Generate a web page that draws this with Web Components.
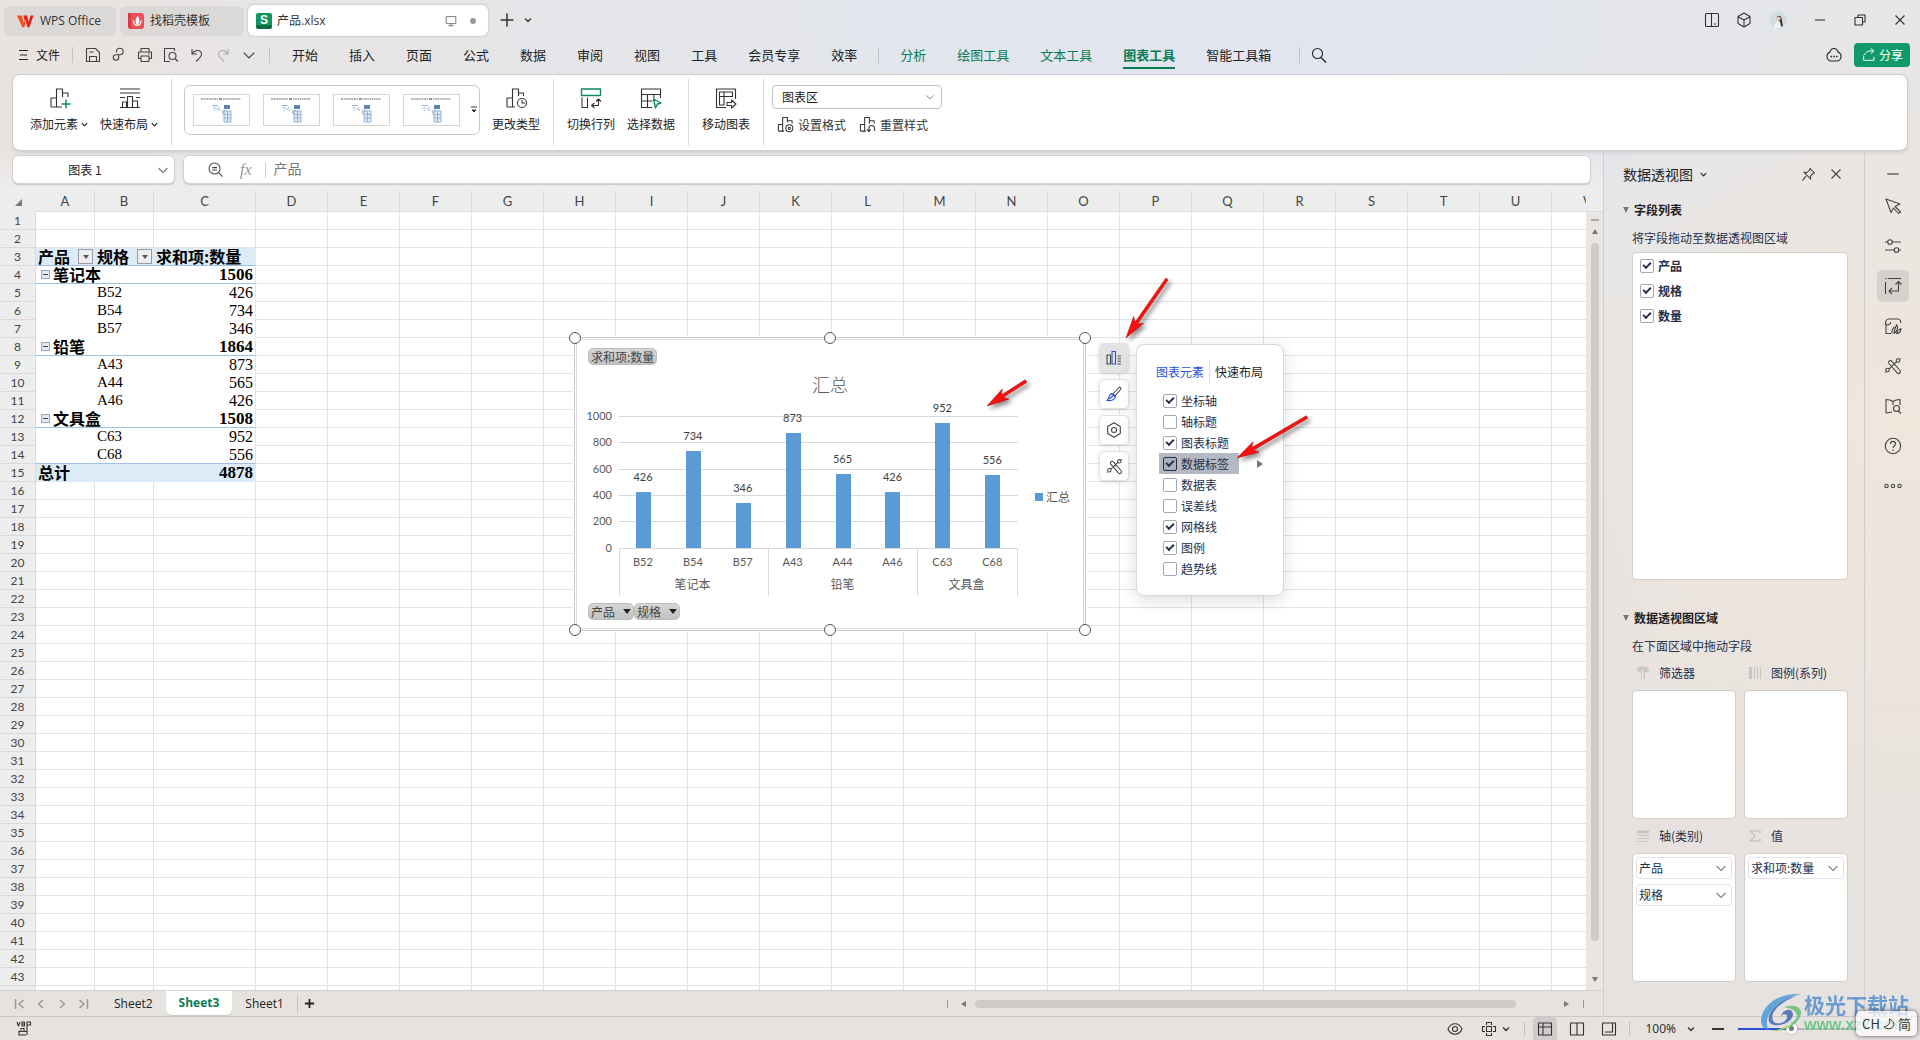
<!DOCTYPE html>
<html lang="zh-CN">
<head>
<meta charset="utf-8">
<title>产品.xlsx - WPS Office</title>
<style>
html,body{margin:0;height:100%}
body{overflow:hidden;color:#222;font:12px/16px "Noto Sans CJK SC",sans-serif;
background:
 radial-gradient(ellipse 800px 260px at 1180px 20px,#e1e5f0,rgba(225,229,240,0)),
 radial-gradient(ellipse 400px 500px at 1900px 420px,#efe6dc,rgba(239,230,220,0)),
 linear-gradient(90deg,#e9e3df,#e7e5e6 300px,#e5e6e9 1920px) 0 0/100% 300px no-repeat,
 linear-gradient(180deg,#e7e7e9,#e8e2df 60%,#e6e2df)}
</style>
</head>
<body>
<wps-app></wps-app>
<script>
const BASE=`*{box-sizing:border-box}
button{font:inherit;color:inherit;background:none;border:0;padding:0;margin:0;display:inline-flex;align-items:center;justify-content:center}
a{color:inherit;text-decoration:none}
input,select{font:inherit;color:inherit;margin:0}
input[type=checkbox]{appearance:none;flex:none;width:14px;height:14px;border:1px solid #a3a7b4;border-radius:2px;background:#fff;display:block;position:relative}
input[type=checkbox]:checked::after{content:"";position:absolute;left:2px;top:2px;width:6px;height:3px;border:solid #26304a;border-width:0 0 2px 2px;transform:rotate(-45deg)}`;
function define(tag,css,html){
  customElements.define(tag,class extends HTMLElement{
    constructor(){
      super();
      this.attachShadow({mode:'open'}).innerHTML='<style>'+BASE+css+'</style>'+(typeof html==='function'?html(this):html);
    }
  });
}

const G='stroke="#0f8a5f"';
const ICONS={
 w:[20,'<path d="M1 4h5.500l2 8 1.500-5h3l-4 10H7z" fill="#fa4b1e" stroke="none"/><path d="M8 4h4.500l1.500 7 2-7h3.500l-4.500 13h-3z" fill="#e3241b" stroke="none"/><path d="M10 9l2 8" stroke="#ffd9cc"/>'],
 daoke:[16,'<rect width="16" height="16" rx="3" fill="#ef4f56" stroke="none"/><path d="M0 0h3v16H3a3 3 0 0 1-3-3z" fill="#d93a44" stroke="none"/><path d="M9.500 3c2.500 2 2.500 6 0 9-2.500-2-2.500-6 0-9z" fill="#fff" stroke="none"/><path d="M5.500 7.500c0 2.500 1.500 4.500 3.500 5M13 7.500c0 2.500-1.500 4.500-3.500 5" stroke="#fff" stroke-width="1.300"/>'],
 monitor:[16,'<path d="M2.500 3h11v8h-11zM8 11v2.500M5 13.500h6"/>'],
 plus:[16,'<path d="M8 1.500v13M1.500 8h13" stroke-width="1.500"/>'],
 chev:[10,'<path d="M2 3.500l3 3 3-3" stroke-width="1.300"/>'],
 chevw:[12,'<path d="M1.500 4l4.500 4.500L10.500 4"/>'],
 phone:[18,'<rect x="2.500" y="2.500" width="13" height="13" rx="1"/><path d="M8.500 2.500v13M11 13h2"/>'],
 cube:[18,'<path d="M9 2l6 3.500v7L9 16l-6-3.500v-7zM3.500 6L9 9l5.500-3M9 9v7"/>'],
 min:[14,'<path d="M2 7h10"/>'],
 restore:[14,'<path d="M2 4.500h7.500V12H2zM5 4.500V2h7v7H9.500"/>'],
 close:[14,'<path d="M2.500 2.500l9 9M11.500 2.500l-9 9"/>'],
 menu:[12,'<path d="M1 1.500h9M2 6h7M1 10.500h9"/>'],
 save:[18,'<path d="M2.500 2.500h9l4 4v9h-13zM5.500 15.500v-5h7v5M5.500 6h4"/>'],
 export:[18,'<path d="M6.500 6.500V5.500a3.300 3.300 0 1 1 3.300 3.300H6a2.700 2.700 0 1 0 2.700 2.700V8"/>'],
 print:[18,'<path d="M5 6V2.500h8V6M5 12.500H2.500V6h13v6.500H13M5 10h8v5.500H5zM12 8h1.500"/>'],
 preview:[18,'<path d="M8 15.500H2.500v-13h10V5"/><circle cx="10.500" cy="10" r="3.500"/><path d="M13 12.500l3 3"/>'],
 undo:[18,'<path d="M4 3v5h5M4.500 7.500C7 3.500 13 3.500 13.500 8c0 3-3 5-5.500 7.500"/>'],
 redo:[18,'<path d="M14 3v5H9M13.500 7.500C11 3.500 5 3.500 4.500 8c0 3 3 5 5.500 7.500"/>'],
 search:[18,'<circle cx="7.500" cy="7.500" r="5"/><path d="M11 11.500l5 5" stroke-width="1.300"/>'],
 cloud:[18,'<path d="M9 2.500c2 0 3.500 1.500 4 3.500 2 1 3.500 2.500 3 5-.5 2.500-2 4-4 4H6c-2 0-3.500-1.500-4-4-.5-2.500 1-4 3-5 .5-2 2-3.500 4-3.500z"/><path d="M5.500 10.500h1.500M8.300 10.500h1.500M11 10.500h1.500" stroke-width="1.600"/>'],
 share:[18,'<path d="M3 9.500v5.500h11.500V11M4 9c1-3.500 4-5 10-4.500M11 1.500l3.500 3-3.500 3"/>'],
 addel:[22,`<path d="M2 20v-9h5.500M7.500 20V2h6v8M2 20h11M13.500 6h5.500v4"/><path ${G} stroke-width="1.400" d="M17 12.500v9M12.500 17h9"/>`],
 layout:[22,'<path d="M1 2h20M1 6h20M1 10.500h5M17 10.500h4M1 20.500h20M3.500 20.500v-5.500h4v5.500M8.500 20.500V9.500h5v11M13.500 14h5v6.500"/>'],
 type:[22,'<path d="M2 20v-9h5.500M7.500 20V2h6v7M2 20h8M13.500 6h5v3"/><circle cx="17" cy="16" r="4.500"/><path d="M17 13v3h3"/>'],
 swap:[22,`<path ${G} stroke-width="1.400" d="M1.500 2h19v6.500h-19z"/><path d="M2 10.500V20.500h5.500v-10M12 18.500h6.500v-6M14.500 16l-3 2.500 3 2.500M16 14.500l2.500-2.500 2.500 2.500"/>`],
 pick:[22,`<path d="M12 20.500H1.500V2h19v9M1.500 7.500h19M7.500 7.500v13M1.500 14h11M14 7.500v4"/><path ${G} stroke-width="1.400" d="M13.500 12l7.500 4-3.500 1-2 4z"/>`],
 move:[22,'<path d="M11 20.500H1.500V2h19v10M4.500 5h13v4.500H9V18H4.500zM9 5v4.500M4.500 9.500H9M12 15.500h4.500V13l4.500 4-4.500 4v-2.500H12z"/>'],
 setfmt:[18,'<path d="M1.500 16V9H6M6 16V1.500h5V7M1.500 16h6M11 5h5v3"/><circle cx="13" cy="13" r="3.700"/><circle cx="13" cy="13" r="1.200"/>'],
 reset:[18,'<path d="M1.500 16V9H6M6 16V1.500h5V8M1.500 16h6M11 5h5v3M10.500 16v-3a3 3 0 0 1 6 0v3M8.500 14l2 2.500 2-2.500"/>'],
 zoomout:[18,'<circle cx="8" cy="8" r="5.800"/><path d="M5.500 7h5M5.500 9.500h5M12.300 12.300l4.200 4.200"/>'],
 pin:[16,'<path d="M9.500 1.500l5 5-2 .5-2.500 3 .5 3L3 5.500l3 .5 3-2.500zM5.500 9.500l-4 5"/>'],
 cursor:[18,'<path d="M2 2l14 5-5 2.500 5.500 5.500-2 1.500-5-5.500L7 15.500z"/>'],
 sliders:[18,'<path d="M1 5h3M8 5h9M1 13h9.500M15 13h2"/><circle cx="6" cy="5" r="2.300"/><circle cx="12.500" cy="13" r="2.300"/>'],
 pivot:[18,'<path d="M4 1.500h13M1.500 5v12M1 1.500h1.500M5 14h9.500V5M8 11l-3 3 3 3M11.500 7.500l3-3 3 3"/>'],
 style:[18,'<path d="M7 16.500H2V6.500M2 8C.5 4 3 2 5 2h9c2 0 3 2 2.500 4M2 8c3 0 5-1 4.500-3M8 16.500c-1-3 1-5 2.500-6.500M10 16.500c0-4 2-6 2.500-9 2 3 1 6-2.500 9zM12.500 16.500c1-3 2-4 4.500-5 0 3-1.500 5-4.500 5z"/>'],
 tools:[18,'<path d="M5 6.500a1.800 1.800 0 0 1 2.800-2.300l8.200 9.300a1.800 1.800 0 0 1-2.800 2.300zM8 9l2.500-2.300"/><circle cx="14" cy="3.500" r="1.800"/><circle cx="3.500" cy="13" r="1.800"/><path d="M10.500 6.500l2.300-1.800M5 12l2-2M1.500 15l-.5.500M16 2l.7-.7"/>'],
 book:[18,'<path d="M8 15l-6 1V2.500c3 0 5 .5 7 2 2-1.500 4-2 7-2V8M9 4.500V8"/><circle cx="12.500" cy="11.500" r="3"/><path d="M14.500 14l2.500 2.500"/>'],
 help:[18,'<circle cx="9" cy="9" r="7.700"/><path d="M6.500 7c0-3.500 5-3.500 5 0 0 2-2.500 2-2.500 4M9 12.500v1.500"/>'],
 dots:[18,'<circle cx="2.500" cy="9" r="1.700"/><circle cx="9" cy="9" r="1.700"/><circle cx="15.500" cy="9" r="1.700"/>'],
 bars:[16,'<path d="M1 5h3.500v9H1z"/><path stroke="#2a50d8" d="M6 1.500h3.500V14H6z"/><path d="M11.500 6H15M11.500 8.700H15M11.500 11.300H15M11.500 14H15"/>'],
 brush:[16,'<path d="M7 8l6-6.500c1-.5 2.500.5 1.500 2L9 10z"/><path stroke="#2a50d8" d="M5.500 7.500L9.500 11c0 2-4 4-8.500 3.500 2.500-2 1-5 4.500-7zM3 13l4-3"/>'],
 hex:[16,'<path d="M8 .8l6.300 3.600v7.200L8 15.200l-6.300-3.600V4.400z"/><circle cx="8" cy="8" r="2.500"/>'],
 filter:[14,'<path d="M1 2c2-2 10-2 12 0v3L9 7v6H5V7L1 5z" fill="#cbc8c6" stroke="none"/><path d="M6.500 4v9" stroke="#eee"/>'],
 cols:[14,'<path d="M2.500 1v12" stroke="#c8c5c3" stroke-width="3"/><path d="M6.500 1v12M9.500 1v12M12.500 1v12" stroke="#c8c5c3"/>'],
 rows:[14,'<path d="M1 3h12" stroke="#c8c5c3" stroke-width="3"/><path d="M1 6.500h12M1 9.500h12M1 12.500h12" stroke="#c8c5c3"/>'],
 sigma:[14,'<path d="M12 4V2H2l5 5-5 5h10v-2" stroke="#c8c5c3" stroke-width="1.600"/>'],
 first:[12,'<path d="M1.500 1v10M9.500 2L5 6l4.500 4" stroke-width="1.600"/>'],
 prev:[12,'<path d="M8 2L3.500 6 8 10" stroke-width="1.600"/>'],
 next:[12,'<path d="M4 2l4.500 4L4 10" stroke-width="1.600"/>'],
 last:[12,'<path d="M10.500 1v10M2.500 2L7 6l-4.500 4" stroke-width="1.600"/>'],
 add:[12,'<path d="M6 1v10M1 6h10" stroke-width="2"/>'],
 vb:[16,'<path d="M1 1l1.500 4L4 1M6 1v4h2.500V1zM6 3h2.500M11 14V1h3.500v3H11M3 9.500v4.500h7M5 9.500V7.500h3v3h2.500M3 10.500h5"/>'],
 eye:[16,'<path d="M1 8c3-7 11-7 14 0-3 7-11 7-14 0z"/><circle cx="8" cy="8" r="2.500"/>'],
 cross:[16,'<path d="M5.500 5.500h5v5h-5zM5.500 4V1.500h5V4M5.500 12v2.500h5V12M4 5.500H1.500v5H4M12 5.500h2.500v5H12"/>'],
 grid:[16,'<path d="M1.500 2h13v12h-13zM1.500 6h13M6 2v12"/>'],
 split:[16,'<path d="M1.500 2h13v12h-13zM8 2v12"/>'],
 page:[16,'<path d="M1.500 2h13v12h-13zM4 11h7.500V2"/>']
};
customElements.define('wps-icon',class extends HTMLElement{
  constructor(){
    super();
    const [v,p]=ICONS[this.getAttribute('name')], s=this.getAttribute('size')||v;
    this.attachShadow({mode:'open'}).innerHTML=`<style>:host{display:inline-flex;flex:none}svg{display:block}</style><svg width="${s}" height="${s}" viewBox="0 0 ${v} ${v}" fill="none" stroke="currentColor" stroke-width="1.1" stroke-linejoin="round" aria-hidden="true">${p}</svg>`;
  }
});
const I=(n,s)=>`<wps-icon name="${n}"${s?` size="${s}"`:''}></wps-icon>`;
const B=(n,label,s,cls='')=>`<button class="${cls}" aria-label="${label}">${I(n,s)}</button>`;

define('title-bar',`:host{display:flex;height:38px;padding:0 13px 2px 4px;align-items:flex-end;color:#333;font-family:"Open Sans","Noto Sans CJK SC",sans-serif}
.tab{height:30px;border-radius:6px;background:#dbd9d8;display:flex;align-items:center;gap:6px;padding:0 12px;margin-right:4px}
.t1{width:112px}.t2{width:124px;padding:0 8px;gap:6px}
.on{width:240px;height:31px;background:#fff;box-shadow:0 0 2px rgba(0,0,0,.3);padding:0 11px 0 8px;gap:5px}
.s{width:16px;height:16px;background:linear-gradient(#12955f 12px,#0a6b45 12px);border-radius:2px;color:#fff;font:bold 12px/15px "Liberation Sans",sans-serif;text-align:center}
.on wps-icon{color:#777}
.g{flex:1}.dot{width:6px;height:6px;border-radius:50%;background:#999;margin:0 1px 0 7px}
.new{margin:0 0 8px 7px;gap:8px;display:flex;align-items:center}
.r{display:flex;align-items:center;height:32px;gap:26px}
.r>.n{margin-right:-12px}.r>.k{margin-right:-10px}
.av{width:18px;height:18px;border-radius:50%}`,
`<a class="tab t1" href="#">${I('w',18)}WPS Office</a><a class="tab t2" href="#">${I('daoke')}找稻壳模板</a>
<a class="tab on" href="#"><span class="s">S</span>产品.xlsx<span class="g"></span>${I('monitor',14)}<span class="dot"></span></a>
<div class="new">${B('plus','新建')}${B('chev','更多')}</div><div class="g"></div>
<div class="r">${B('phone','侧栏',0,'n')}${B('cube','应用',0,'k')}
<svg class="av" viewBox="0 0 18 18" aria-hidden="true"><circle cx="9" cy="9" r="9" fill="#cfdfe0"/><path d="M7.500 7c.5-3 4.500-3 5 0l1.500 8-2 .5-1-5z" fill="#4a3238"/><circle cx="9.500" cy="7.500" r="2" fill="#e8c4b4"/><path d="M5 17c0-4 3-7 5-6l2 6z" fill="#eef6f8"/></svg>
${B('min','最小化')}${B('restore','还原')}${B('close','关闭')}</div>`);

define('menu-bar',`:host{display:flex;height:36px;align-items:center;padding:0 10px 2px 18px;font-size:13px;color:#222}
.f{gap:6px;font-size:12px}
i{width:1px;height:16px;background:#c3c3c5}
.q{display:flex;gap:8px;margin:0 0 0 11px;align-items:center;color:#444}
.q .d{opacity:.35}.q button:last-child{margin-left:2px}
nav{display:flex;gap:31px;margin-left:22px;align-items:center}
nav i{margin:0 -10px 0 -10px}
nav a{position:relative}
nav .c{color:#0a7c53}.on{color:#0a7c53;font-weight:bold}
.on::after{content:"";position:absolute;left:0;right:0;bottom:-6px;height:2px;background:#0a7c53}
.g{flex:1}
.share{margin-left:11px;width:56px;height:24px;border-radius:4px;background:#12996a;color:#fff;font-size:12px;gap:2px}`,
`<button class="f">${I('menu')}文件</button><i style="margin-left:12px"></i>
<div class="q">${B('save','保存')}${B('export','输出')}${B('print','打印')}${B('preview','预览')}${B('undo','撤销')}${B('redo','恢复',0,'d')}${B('chevw','更多',14)}</div><i style="margin-left:13px"></i>
<nav>${'开始 插入 页面 公式 数据 审阅 视图 工具 会员专享 效率'.split(' ').map(t=>`<a href="#">${t}</a>`).join('')}<i></i>${'分析 绘图工具 文本工具'.split(' ').map(t=>`<a class="c" href="#">${t}</a>`).join('')}<a class="on" href="#">图表工具</a><a href="#">智能工具箱</a></nav>
<i style="margin:0 10px 0 28px"></i>${B('search','搜索')}<span class="g"></span>${B('cloud','云')}<button class="share">${I('share',16)}分享</button>`);

const THUMB=`<svg width="57" height="32" viewBox="0 0 57 32" aria-hidden="true"><rect x=".5" y=".5" width="56" height="31" fill="#fff" stroke="#d6d6d6"/><path d="M8 5h17" stroke="#999" stroke-width="1.500" stroke-dasharray="2 .6"/><path d="M26 5h3" stroke="#a5603a" stroke-width="1.500"/><path d="M30 5h18" stroke="#999" stroke-width="1.500" stroke-dasharray="1.600 .6"/><path d="M19 11.500h6M20 14h3M21 16.500h1M26 13l-2 3M27 15l-1 2" stroke="#8fb4d8"/><path d="M31 11h6v4h-6z" fill="#5b84b1"/><circle cx="31" cy="18" r="2.500" fill="#ccc"/><path d="M31 17h7v11h-7zM31 20.500h7M31 24h7M34.500 17v11" fill="#dfeaf5" stroke="#8fb4d8"/></svg>`;
const big=(ic,t,dd)=>`<button class="big">${I(ic)}<span>${t}${dd?I('chev',9):''}</span></button>`;
define('ribbon-bar',`:host{display:flex;height:75px;margin:1px 13px 0 13px;background:#fff;border-radius:7px;box-shadow:0 0 0 1px #d0ced0,0 2px 4px rgba(0,0,0,.15);padding:4px 0}
.grp{display:flex;align-items:flex-start;border-right:1px solid #d8d8d8;height:66px}
.grp:last-child{border:0}
.big{flex-direction:column;gap:7px;padding-top:8px;color:#333}
.big span{display:flex;align-items:center;gap:2px;color:#222}
.gal{display:flex;border:1px solid #c6c6c8;border-radius:6px;height:50px;width:296px;margin:6px 12px 0 12px;align-items:center;gap:13px;padding:0 1px 0 8px}
.gal button:last-child{margin-left:-3px}
.col{padding:6px 8px 0;display:flex;flex-direction:column;gap:7px}
.sel{position:relative;display:flex;align-items:center;width:170px}
select{appearance:none;width:100%;height:24px;border:1px solid #c3c3c5;border-radius:4px;background:#fff;padding:0 9px;color:#222}
.sel wps-icon{position:absolute;right:7px;color:#888}
.row{display:flex;gap:13px;padding-left:5px}.row button{gap:4px;color:#333}`,
`<div class="grp" style="padding:0 12px 0 17px;gap:11px">${big('addel','添加元素',1)}${big('layout','快速布局',1)}</div>
<div class="grp" style="padding-right:13px"><div class="gal">${(`<button aria-label="图表样式">${THUMB}</button>`).repeat(4)}<button aria-label="更多样式"><svg width="8" height="8" viewBox="0 0 8 8"><path d="M1 1h6M2 4l2 2 2-2z" stroke="#333" fill="#333"/></svg></button></div>${big('type','更改类型')}</div>
<div class="grp" style="padding:0 13px;gap:12px">${big('swap','切换行列')}${big('pick','选择数据')}</div>
<div class="grp" style="padding:0 13px">${big('move','移动图表')}</div>
<div class="grp col"><label class="sel"><select aria-label="图表区域"><option>图表区</option></select>${I('chevw',10)}</label>
<div class="row"><button>${I('setfmt',17)}设置格式</button><button>${I('reset',17)}重置样式</button></div></div>`);

define('formula-bar',`:host{display:flex;height:41px;padding:6px 13px 8px 13px;gap:10px}
.box{background:#fff;border-radius:5px;box-shadow:0 0 0 1px #d3d1d1,0 1px 1px 1px #c8c6c6;display:flex;align-items:center}
.name{width:161px;padding-right:5px;color:#222}
.name input{flex:1;min-width:0;border:0;background:none;text-align:center;outline:0;font-size:12px;padding:0}
.name wps-icon{color:#777}
.f{flex:1;padding-left:23px;color:#444}
em{font:italic 16px/18px "Liberation Serif",serif;color:#999;margin:0 13px 0 16px}
i{width:1px;height:16px;background:#ccc}
.f input{flex:1;border:0;background:none;outline:0;font-size:14px;color:#777;padding:0 0 3px 8px;height:26px}`,
`<div class="box name"><input aria-label="名称框" value="图表 1">${I('chevw',12)}</div><div class="box f">${B('zoomout','浏览',17)}<em>fx</em><i></i><input aria-label="编辑栏" value="产品"></div>`);

const COLS='ABCDEFGHIJKLMNOPQRSTUV'.split('');
const W=[59,59,102].concat(Array(19).fill(72));
const DATA={
3:['h','产品','规格','求和项:数量'],4:['g','笔记本','','1506'],5:['','','B52','426'],6:['','','B54','734'],7:['','','B57','346'],
8:['g','铅笔','','1864'],9:['','','A43','873'],10:['','','A44','565'],11:['','','A46','426'],12:['g','文具盒','','1508'],13:['','','C63','952'],14:['l','','C68','556'],15:['t','总计','','4878']};
define('sheet-grid',`:host{display:flex;flex:1;min-height:0;position:relative;background:#ededed}
.view{flex:1;overflow:hidden;min-width:0}
table{table-layout:fixed;border-collapse:separate;border-spacing:0;width:1624px;background:#fff}
th,td{padding:0;height:18px;border:solid #e2e2e2;border-width:0 1px 1px 0;overflow:hidden}
th{background:#ededed;font:12px/17px Lato,"Noto Sans CJK SC",sans-serif;color:#444;border-color:#dadada}
thead th{height:21px;font-size:13px}
thead th:first-child{border-color:#ededed}
td div{height:17px;line-height:17px;display:flex;align-items:center;white-space:nowrap;color:#000;font-size:15px;font-family:"Liberation Serif","Noto Sans CJK SC",serif}
.p{border-right-color:#fff;border-bottom-color:#fff;overflow:visible}
.p:nth-child(4){border-right-color:#e2e2e2}
.p div{padding:0 2px}
.num div{justify-content:flex-end;font-size:16px}
.h td.p,.t td.p{background:#ddebf7;border-right-color:#ddebf7}
.h td.p,.g td.p,.l td.p{border-bottom-color:#9bc2e6}
.t td.p{border-bottom-color:#ddebf7}
.h .p div,.g .p div,.t .p div{font-weight:bold;font-size:16px;font-family:"Noto Sans CJK SC",sans-serif}
.g .num div,.t .num div{font-size:17px;font-family:"Liberation Serif",serif}
.h .p div{padding:0 1px 0 2px;justify-content:flex-start}
.h .p button{margin-left:auto;width:15px;height:15px;border:1px solid #9a9aa2;background:#eeeef0;flex:none}
.g .p button{width:9px;height:9px;border:1px solid #a0a8b8;background:#e6eaf2;margin:0 3px;flex:none}
.g .p button::after{content:"";width:5px;height:1px;background:#345}
.dd::after{content:"";border:3px solid transparent;border-top:4px solid #555;border-bottom:0}
.sb{width:17px;background:#e9e5e2;border-top:1px solid #dadada;margin-top:20px;display:flex;flex-direction:column;align-items:center;padding:7px 0 8px}
.sb b{width:8px;height:2px;background:#aaa}
.sb u{flex:1;width:8px;border-radius:4px;background:#cfcbc8;margin:9px 0 36px}
.up{border:3px solid transparent;border-bottom:5px solid #777;border-top:0;margin-top:8px}
.dn{border:3px solid transparent;border-top:5px solid #777;border-bottom:0}`,
()=>{
 let h=`<div class="view"><table><colgroup><col style="width:36px">${W.map(w=>`<col style="width:${w}px">`).join('')}</colgroup><thead><tr><th aria-label="全选"><svg width="7" height="7" style="margin-left:2px"><path d="M7 0v7H0z" fill="#777"/></svg></th>${COLS.map(c=>`<th>${c}</th>`).join('')}</tr></thead><tbody>`;
 for(let r=1;r<=44;r++){
  const d=DATA[r];
  h+=`<tr class="${d?d[0]:''}"><th>${r<44?r:''}</th>`;
  for(let c=0;c<COLS.length;c++){
   if(d&&c<3){
    const t=d[c+1];
    const pre=d[0]==='g'&&c===0?'<button aria-label="折叠"></button>':'';
    const post=d[0]==='h'&&c<2?'<button class="dd" aria-label="筛选"></button>':'';
    h+=`<td class="p${c===2&&d[0]!=='h'?' num':''}"><div>${pre}${t}${post}</div></td>`;
   }else h+='<td></td>';
  }
  h+='</tr>';
 }
 return h+`</tbody></table></div><div class="sb"><b></b><span class="up"></span><u></u><span class="dn"></span></div><slot></slot>`;
});

const PTS=[['B52',426],['B54',734],['B57',346],['A43',873],['A44',565],['A46',426],['C63',952],['C68',556]];
define('pivot-chart',`:host{position:absolute;left:574px;top:146px;width:512px;height:294px;background:#fff;border:1px solid #c9c9cf;outline:1px solid #fff;box-shadow:inset 0 0 0 1px #fff,inset 0 0 0 2px #d9d9d9;padding:10px 12px 10px 13px;display:flex;flex-direction:column}
button.p{height:17px;border-radius:5px;background:linear-gradient(#d6d6d6,#c2c2c2);border:1px solid #bdbdbd;color:#444;padding:0 2px;align-self:flex-start;gap:8px}
.row{display:flex;gap:0}
.row button::after{content:"";border:4px solid transparent;border-top:5px solid #222;border-bottom:0}
svg{display:block;flex:1;overflow:visible}
text{font:11px Lato,"Noto Sans CJK SC",sans-serif;fill:#595959}
.v{fill:#404040}.c{font:12px "Noto Sans CJK SC",sans-serif}
.ti{font:300 18px "Noto Sans CJK SC",sans-serif}
.h{position:absolute;width:12px;height:12px;border-radius:50%;border:1px solid #555;background:#fff}`,
()=>{
 let s='';
 for(let i=0;i<6;i++){const y=Math.floor(548-i*26.3)+.5;s+=`<path d="M619 ${y}h399" stroke="#d9d9d9"/><text x="612" y="${y+3.500}" text-anchor="end">${i*200}</text>`;}
 PTS.forEach(([n,v],i)=>{const x=619+49.9*(i+.5),hh=Math.round(v*.1315);
  s+=`<rect x="${Math.round(x-8)}" y="${548-hh}" width="15" height="${hh}" fill="#5b9bd5"/><text class="v" x="${x-1}" y="${548-hh-11}" text-anchor="middle">${v}</text><text x="${x-1}" y="566" text-anchor="middle">${n}</text>`;});
 [619.5,768.5,917.5,1017.5].forEach(x=>s+=`<path d="M${x} 548v48" stroke="#d9d9d9"/>`);
 [['笔记本',692.5],['铅笔',842.5],['文具盒',966.5]].forEach(([t,x])=>s+=`<text class="c" x="${x}" y="589" text-anchor="middle">${t}</text>`);
 s+='<text class="ti" x="830" y="392" text-anchor="middle">汇总</text><rect x="1035" y="493" width="8" height="8" fill="#5b9bd5"/><text class="c" x="1046" y="502">汇总</text>';
 const hs=[[-6,-6],[249,-6],[504,-6],[-6,286],[249,286],[504,286]].map(([x,y])=>`<span class="h" style="left:${x}px;top:${y}px"></span>`).join('');
 return `<button class="p">求和项:数量</button><svg viewBox="588 365 485 238" role="img" aria-label="汇总">${s}</svg><div class="row"><button class="p">产品</button><button class="p">规格</button></div>${hs}`;
});

define('chart-tools',`:host{position:absolute;left:1100px;top:152px;display:flex;align-items:flex-start;gap:8px}
.bs{display:flex;flex-direction:column;gap:8px;padding-top:1px}
.bs button{width:28px;height:28px;border-radius:4px;background:#fff;box-shadow:0 0 0 1px #e2e2e2,0 1px 5px rgba(0,0,0,.2);color:#444}
.bs .on{background:#e3e3e4}
.pop{width:148px;margin-top:1px;background:#fff;border:1px solid #d8d8dc;border-radius:8px;box-shadow:0 4px 16px rgba(0,0,0,.14);padding:15px 0 16px}
.t{display:flex;height:24px;align-items:center;padding-left:19px;gap:5px;margin-bottom:6px;color:#222}
.t i{width:1px;height:24px;background:#ddd}.t .a{color:#2a50d8}
.r{display:flex;align-items:center;margin-left:22px;height:21px}
label{display:flex;align-items:center;gap:4px;height:21px;width:80px;padding-left:4px;color:#26304a}
.hl label{background:#b4b9c4}.hl input{background:#a9afbc;border:1px solid #26304a}
.ar{border:4px solid transparent;border-left:6px solid #777;border-right:0;margin-left:18px}`,
`<div class="bs">${B('bars','图表元素',16,'on')}${B('brush','样式',16)}${B('hex','设置',16)}${B('tools','工具',17)}</div>
<div class="pop"><div class="t"><button class="a">图表元素</button><i></i><button>快速布局</button></div>
${[['坐标轴',1],['轴标题',0],['图表标题',1],['数据标签',2],['数据表',0],['误差线',0],['网格线',1],['图例',1],['趋势线',0]].map(([t,c])=>`<div class="r${c===2?' hl':''}"><label><input type="checkbox"${c?' checked':''}>${t}</label>${c===2?'<span class="ar"></span>':''}</div>`).join('')}</div>`);

define('red-arrows',`:host{position:absolute;left:970px;top:79px;pointer-events:none}svg{display:block;filter:drop-shadow(3px 3px 2px rgba(0,0,0,.45))}`,
()=>{
 const a=(x1,y1,x2,y2,L=22)=>{const d=Math.hypot(x2-x1,y2-y1),r=Math.atan2(y2-y1,x2-x1)*180/Math.PI;return `<path transform="translate(${x1} ${y1}) rotate(${r})" d="M0 -1.500L${d-L+4} -1.500L${d-L} -6L${d} 0L${d-L} 6L${d-L+4} 1.500L0 1.500Z" fill="#fe0d0d" stroke="#a01010" stroke-width=".5"/>`;};
 return `<svg width="350" height="200" viewBox="970 270 350 200" aria-hidden="true">${a(1167,279,1126,338)}${a(1307,417,1237,458)}${a(1026,381,987,406)}</svg>`;
});

define('sheet-tabs',`:host{display:flex;height:26px;border-top:1px solid #d4d2d1;background:rgba(230,226,222,.5);align-items:center;color:#222;font-family:"Open Sans","Noto Sans CJK SC",sans-serif}
.nav{display:flex;color:#999;gap:9px;padding-left:14px}
a{padding:0 13px;line-height:23px}
.on{height:24px;background:#fff;border-radius:0 0 6px 6px;color:#0a7c53;font-weight:bold;box-shadow:0 1px 1px #c8c8c8;align-self:flex-start}
i{width:1px;height:18px;background:#c4c2c1}
.g{flex:1}
b{width:1px;height:8px;background:#999}
.l{border:3px solid transparent;border-right:5px solid #777;border-left:0;margin:0 9px 0 13px}
.r{border:3px solid transparent;border-left:5px solid #777;border-right:0;margin:0 14px 0 48px}
.th{width:541px;height:8px;border-radius:4px;background:#cfcbc8}`,
`<div class="nav">${B('first','首个')}${B('prev','上一个')}${B('next','下一个')}${B('last','末个')}</div><span style="width:12px"></span>
<a href="#">Sheet2</a><a class="on" href="#">Sheet3</a><a href="#">Sheet1</a><i></i><button style="margin-left:6px" aria-label="新建工作表">${I('add',11)}</button>
<span class="g"></span><b></b><span class="l"></span><span class="th"></span><span class="r"></span><b style="margin-right:19px"></b>`);

define('field-panel',`:host{display:flex;flex-direction:column;width:261px;border-left:1px solid #cfcdcd;padding:0 16px 34px 19px;color:#26304a}
.hd{display:flex;height:48px;align-items:center;font-size:14px;color:#222;padding:0 5px 0 0}
.hd span{flex:1;display:flex;align-items:center;gap:6px}
.hd button{color:#444;margin-left:13px}
h3{font-size:12px;line-height:20px;margin:2px 0 0;display:flex;align-items:center;gap:5px;color:#222}
h3::before{content:"";border:3px solid transparent;border-top:6px solid #777;border-bottom:0}
p{margin:8px 0 4px 9px;line-height:20px}
.list{flex:1;margin-left:9px;background:#fff;border:1px solid #cfccca;border-radius:4px;padding:3px 7px}
.list label{display:flex;align-items:center;height:20px;margin-bottom:5px;gap:4px;font-weight:bold;color:#26304a}
.z{display:grid;grid-template-columns:1fr 1fr;gap:0 8px;margin-left:9px}
.z h4{font-weight:normal;font-size:12px;line-height:20px;margin:0;display:flex;align-items:center;gap:9px;padding-left:4px;height:34px}
.z div{height:129px;background:#fff;border:1px solid #cfccca;border-radius:4px;padding:3px}
.z div button{display:flex;width:100%;height:22px;border:1px solid #e3e4ea;border-radius:4px;margin-bottom:5px;padding:0 4px 0 2px;justify-content:space-between}
.z wps-icon{color:#888}`,
`<div class="hd"><span>数据透视图${I('chev',9)}</span>${B('pin','固定',15)}${B('close','关闭')}</div>
<h3>字段列表</h3><p>将字段拖动至数据透视图区域</p>
<div class="list">${['产品','规格','数量'].map(t=>`<label><input type="checkbox" checked>${t}</label>`).join('')}</div>
<h3 style="margin-top:28px">数据透视图区域</h3><p style="margin-bottom:0">在下面区域中拖动字段</p>
<section class="z"><h4>${I('filter')}筛选器</h4><h4>${I('cols')}图例(系列)</h4><div></div><div></div>
<h4>${I('rows')}轴(类别)</h4><h4>${I('sigma')}值</h4><div><button>产品${I('chevw',12)}</button><button>规格${I('chevw',12)}</button></div><div><button>求和项:数量${I('chevw',12)}</button></div></section>`);

define('side-rail',`:host{display:flex;flex-direction:column;width:56px;border-left:1px solid #cfcdcd;align-items:center;padding-top:16px;gap:8px;color:#444}
button{width:32px;height:32px;border-radius:5px}.fold{height:16px}.on{background:#d5d2ce}`,
`${B('min','收起',16,'fold')}${B('cursor','选择')}${B('sliders','属性')}${B('pivot','透视图',0,'on')}${B('style','风格')}${B('tools','工具')}${B('book','帮助中心')}${B('help','帮助')}${B('dots','更多')}`);

define('status-bar',`:host{display:flex;height:24px;border-top:1px solid #c9c6c5;align-items:center;padding:0 16px;color:#333;font-family:"Noto Sans",sans-serif}
.g{flex:1}.on{background:#d0cccb;border-radius:4px;width:24px;height:24px}
i{width:1px;height:14px;background:#c4c2c1}
.m{width:12px;height:2px;background:#333;margin:0 14px 0 16px}
input{appearance:none;width:118px;height:12px;background:linear-gradient(90deg,#2a50d8 53px,#bbb 53px) center/100% 2px no-repeat;margin-right:48px}
input::-webkit-slider-thumb{appearance:none;width:11px;height:11px;border-radius:50%;background:radial-gradient(circle,#777 0 2px,#fff 3px);box-shadow:0 0 2px rgba(0,0,0,.4)}`,
`${B('vb','宏',16)}<span class="g"></span>${B('eye','护眼',16)}<button style="margin-left:18px;gap:4px" aria-label="阅读模式">${I('cross')}${I('chev')}</button><i style="margin:0 8px 0 13px"></i>${B('grid','普通视图',16,'on')}<span style="width:12px"></span>${B('split','分页预览',16)}<span style="width:16px"></span>${B('page','全屏',16)}<i style="margin:0 15px 0 12px"></i><span>100%</span><button style="margin-left:10px" aria-label="缩放">${I('chev')}</button><button class="m" aria-label="缩小"></button><input type="range" aria-label="缩放比例" min="0" max="118" value="53">`);

define('site-mark',`:host{position:absolute;right:11px;bottom:7px;display:flex;align-items:center;gap:1px;opacity:.85;pointer-events:none}
b{display:block;font:bold 21px/24px "Noto Sans CJK SC",sans-serif;color:#5590cf}
span{display:block;font:bold 16px/17px "Liberation Sans",sans-serif;color:#5cc480}`,
`<svg width="43" height="40" viewBox="0 0 43 40" aria-hidden="true"><path d="M41 1C20 0 3 10 1 27c0 6 3 9 8 10C2 26 12 8 41 1z" fill="#4a9bd8"/><path d="M36 3C18 10 8 22 14 29c4 3 11 1 13-4 1-4-3-5-6-2 2-7 11-9 12-2 0 8-14 14-22 10C3 24 16 7 36 3z" fill="#4568b4"/><path d="M24 14c10-3 18 0 17 7-2 10-15 18-30 17 14-2 25-9 26-15 0-5-6-8-13-9z" fill="#62c173"/><path d="M11 38c9 0 17-3 22-8-7 4-14 7-22 8z" fill="#d4d94a"/></svg><div><b>极光下载站</b><span>www.xz7.com</span></div>`);
define('ime-bar',`:host{position:absolute;right:3px;bottom:4px;width:61px;height:25px;border-radius:5px;background:rgba(255,255,255,.7);box-shadow:0 0 4px rgba(0,0,0,.65);display:flex;align-items:center;justify-content:center;gap:3px;font:13px/16px "Noto Sans CJK SC",sans-serif;color:#333}`,
`<span>CH</span><svg width="12" height="12" viewBox="0 0 12 12" fill="none" stroke="#333"><path d="M6 1c2 3 0 7-5 8 3 3 9 2 10-2 0-3-2-5-5-6z"/></svg><span>简</span>`);

define('wps-app',`:host{display:flex;flex-direction:column;height:100vh;position:relative}
main{display:flex;flex:1;min-height:0}.l{flex:1;min-width:0;display:flex;flex-direction:column}
formula-bar{background:linear-gradient(rgba(237,237,237,0),#ededed)}`,
`<title-bar></title-bar><menu-bar></menu-bar><ribbon-bar></ribbon-bar>
<main><div class="l"><formula-bar></formula-bar><sheet-grid><pivot-chart></pivot-chart><chart-tools></chart-tools><red-arrows></red-arrows></sheet-grid><sheet-tabs></sheet-tabs></div><field-panel></field-panel><side-rail></side-rail></main>
<status-bar></status-bar><site-mark></site-mark><ime-bar></ime-bar>`);
</script>
</body>
</html>
